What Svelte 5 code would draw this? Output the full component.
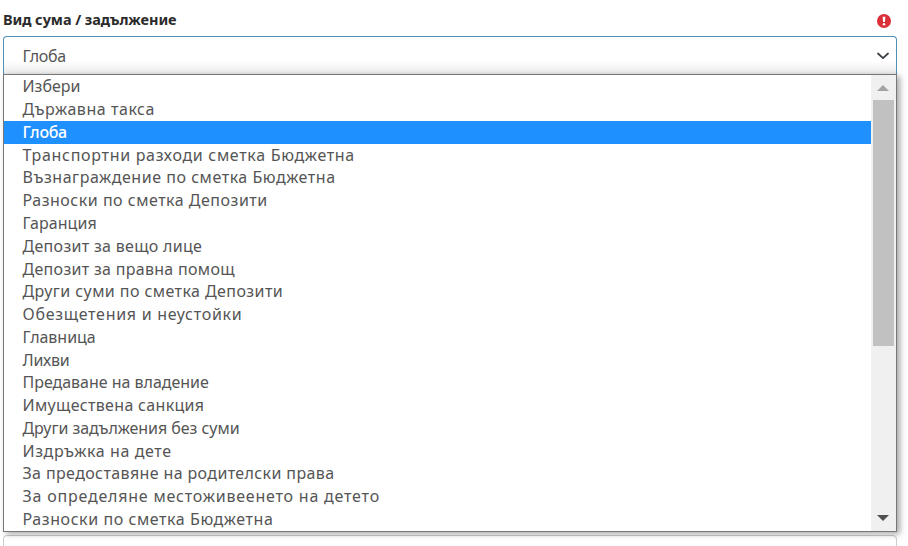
<script>
  // Each option carries its label and tracking in pixels.
  const options = [
    ['Избери', 0],
    ['Държавна такса', 0.55],
    ['Глоба', -0.3],
    ['Транспортни разходи сметка Бюджетна', 0.69],
    ['Възнаграждение по сметка Бюджетна', 0.54],
    ['Разноски по сметка Депозити', 0.51],
    ['Гаранция', 0.05],
    ['Депозит за вещо лице', 0.3],
    ['Депозит за правна помощ', 0.3],
    ['Други суми по сметка Депозити', 0.43],
    ['Обезщетения и неустойки', 0.71],
    ['Главница', -0.03],
    ['Лихви', -0.25],
    ['Предаване на владение', -0.02],
    ['Имуществена санкция', 0.32],
    ['Други задължения без суми', -0.04],
    ['Издръжка на дете', 0.6],
    ['За предоставяне на родителски права', 0.38],
    ['За определяне местоживеенето на детето', 0.79],
    ['Разноски по сметка Бюджетна', 0.57]
  ];
  let selected = $state('Глоба');
</script>

<div class="page" lang="bg">
  <header>
    <span class="label">Вид сума / задължение</span>
    <svg class="alert" width="14" height="14" viewBox="0 0 14 14">
      <circle cx="7" cy="7" r="7" fill="#d9303a" />
      <path d="M5.6 2.8h2.8L7.9 8H6.1z" fill="#fff" />
      <circle cx="7" cy="10.2" r="1.25" fill="#fff" />
    </svg>
  </header>
  <div class="field">
    <span>{selected}</span>
    <svg width="14" height="8" viewBox="0 0 14 8">
      <path d="M2 1.5 7 6.2l5-4.7" fill="none" stroke="#3d4247" stroke-width="1.8" stroke-linecap="round" stroke-linejoin="round" />
    </svg>
  </div>
  <div class="popup">
    <ul>
      {#each options as [name, tracking]}
        <li class:active={name === selected}>
          <button style:letter-spacing={`${tracking}px`} onclick={() => (selected = name)}>{name}</button>
        </li>
      {/each}
    </ul>
    <div class="scrollbar">
      <svg width="12" height="6" viewBox="0 0 12 6"><path d="M0 6 6 0l6 6z" fill="#a3a3a3" /></svg>
      <div class="thumb"></div>
      <svg class="down" width="12" height="6" viewBox="0 0 12 6"><path d="M0 0h12L6 6z" fill="#505050" /></svg>
    </div>
  </div>
  <div class="next"></div>
</div>

<style>
  :global(body) {
    background: #fff;
    overflow: hidden;
  }
  .page {
    box-sizing: border-box;
    width: 908px;
    height: 546px;
    padding: 0 11px 0 3px;
    overflow: hidden;
    display: flex;
    flex-direction: column;
    font-family: 'Noto Sans', 'Open Sans', sans-serif;
    font-size: 16px;
    color: #555;
  }
  header {
    flex: none;
    height: 36px;
    display: flex;
    justify-content: space-between;
    align-items: flex-start;
  }
  .label {
    margin-top: 9px;
    font-size: 14.5px;
    line-height: 20px;
    font-weight: 700;
    letter-spacing: -0.07px;
    color: #2b2b2b;
  }
  .alert {
    margin: 14px 6px 0 0;
  }
  .field {
    flex: none;
    box-sizing: border-box;
    height: 38px;
    padding: 0 6px 0 18.5px;
    border: 1px solid #4f8fb8;
    border-bottom: 0;
    border-radius: 4px 4px 0 0;
    background: linear-gradient(#fff 65%, #ebebeb);
    display: flex;
    justify-content: space-between;
    align-items: center;
    letter-spacing: -0.35px;
  }
  .popup {
    flex: none;
    position: relative;
    box-sizing: border-box;
    height: 458px;
    border: 1px solid #777;
    background: #fff;
    box-shadow: 3px 2px 6px rgba(0, 0, 0, 0.35);
    display: flex;
  }
  ul {
    flex: 1;
    margin: 0;
    padding: 0.4px 0 0;
    list-style: none;
  }
  li {
    height: 22.78px;
    padding-left: 18.5px;
    display: flex;
  }
  button {
    border: 0;
    padding: 0;
    background: none;
    font: inherit;
    line-height: 22.78px;
    color: inherit;
    white-space: nowrap;
  }
  .active {
    background: #1e90ff;
    color: #fff;
  }
  .active button {
    font-weight: 500;
  }
  .scrollbar {
    box-sizing: border-box;
    width: 25px;
    padding-right: 1px;
    background: #f0f0f0;
    display: flex;
    flex-direction: column;
    align-items: center;
  }
  .scrollbar svg {
    flex: none;
    margin-top: 10px;
  }
  .thumb {
    width: 21px;
    height: 246px;
    margin-top: 9px;
    background: #c1c1c1;
  }
  .scrollbar .down {
    margin: auto 0 10px;
  }
  .next {
    flex: none;
    height: 30px;
    margin-top: 3px;
    border: 1px solid #ccc;
    border-radius: 4px;
  }
</style>
